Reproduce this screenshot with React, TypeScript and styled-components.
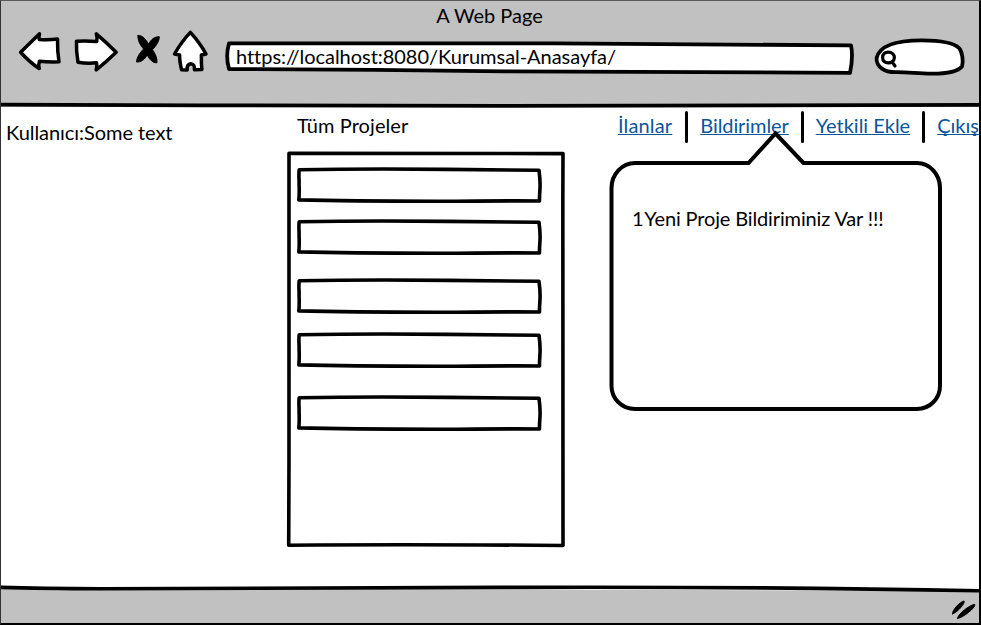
import React from "react";
import styled, { createGlobalStyle } from "styled-components";

const GlobalStyle = createGlobalStyle`
  * { box-sizing: border-box; }
  body { margin: 0; background: #fff; }
`;

const Window = styled.div`
  width: 981px;
  height: 625px;
  display: flex;
  flex-direction: column;
  overflow: hidden;
  border: solid #000;
  border-width: 1px 2px 2px 1px;
  border-top-color: #5a5a5a;
  border-left-color: #333;
  background: #fff;
  color: #000;
  font: 20px/24px Lato, "Open Sans", sans-serif;
  white-space: nowrap;
`;

const Header = styled.header`
  position: relative;
  flex: none;
  height: 106px;
  padding-top: 2px;
  background: #c1c1c1;
`;

const Title = styled.h1`
  margin: 0;
  padding-right: 1px;
  font: inherit;
  text-align: center;
`;

const Toolbar = styled.div`
  display: flex;
  align-items: flex-start;
`;

const Icon = styled.svg<{ $gap: number; $drop?: number }>`
  display: block;
  flex: none;
  margin-left: ${(p) => p.$gap}px;
  margin-top: ${(p) => p.$drop ?? 0}px;
  overflow: visible;
  fill: #fff;
  stroke: #000;
  stroke-width: 3.5;
  stroke-linejoin: round;
  stroke-linecap: round;
`;

const Outline = styled.svg<{ $fill?: string; $weight?: number }>`
  position: absolute;
  inset: 0;
  width: 100%;
  height: 100%;
  overflow: visible;
  fill: ${(p) => p.$fill ?? "none"};
  stroke: #000;
  stroke-width: ${(p) => p.$weight ?? 3.6};
  stroke-linejoin: round;
  stroke-linecap: round;
`;

const AddressBar = styled.div`
  position: relative;
  width: 628px;
  height: 34px;
  margin: 13px 0 0 18px;
  padding: 4px 0 0 11px;
`;

const Label = styled.span<{ $spacing?: number }>`
  position: relative;
  display: block;
  letter-spacing: ${(p) => p.$spacing ?? 0}px;
`;

const Count = styled.span`
  letter-spacing: -2.2px;
`;

const SearchBox = styled.div`
  position: relative;
  width: 90px;
  height: 36px;
  margin: 12px 0 0 22px;
`;

const Content = styled.main`
  flex: 1;
  min-height: 0;
  display: grid;
  grid-template-columns: 286px 322px 1fr;
`;

const UserInfo = styled.section`
  padding: 13px 0 0 5px;
`;

const Projects = styled.section`
  display: flex;
  flex-direction: column;
  padding-top: 6px;
`;

const Heading = styled.h2<{ $indent: number }>`
  margin: 0 0 0 ${(p) => p.$indent}px;
  font: inherit;
  letter-spacing: 0.08px;
`;

const Panel = styled.div`
  position: relative;
  width: 278px;
  height: 396px;
  margin-top: 14px;
  padding: 16px 0 0 10px;
`;

const Field = styled.div<{ $gap: number }>`
  position: relative;
  width: 245px;
  height: 35px;
  margin-bottom: ${(p) => p.$gap}px;
`;

const Side = styled.section`
  min-width: 0;
  overflow: hidden;
`;

const Nav = styled.nav`
  display: flex;
  height: 50px;
  padding: 6px 0 0 9px;
`;

const Link = styled.a<{ $spacing?: number }>`
  height: 24px;
  color: #0b559b;
  letter-spacing: ${(p) => p.$spacing ?? 0}px;
  text-decoration: underline 1px;
  text-underline-offset: 1px;
  text-decoration-skip-ink: none;
`;

const Divider = styled.i<{ $before: number; $after: number }>`
  flex: none;
  width: 3px;
  height: 32px;
  margin: -2px ${(p) => p.$after}px 0 ${(p) => p.$before}px;
  border-radius: 2px;
  background: #000;
`;

const Bubble = styled.div`
  position: relative;
  width: 333px;
  height: 250px;
  margin-top: 4px;
  padding: 45px 0 0 23px;
`;

const Footer = styled.footer`
  position: relative;
  flex: none;
  height: 35px;
`;

const fieldGaps = [17, 24, 19, 28, 0];

const SketchField = ({ gap }: { gap: number }) => (
  <Field $gap={gap}>
    <Outline viewBox="0 0 245 35">
      <path d="M2.2 2.8 C50 1.9 110 2 150 2.4 S220 2.9 242 3.2 C242.8 9 243.1 12 243.1 18 S242.3 28 242.5 34 C200 33.6 170 34.4 140 34.3 S50 34 1.8 32.9 C2.7 25 2 20 2.1 16 S1.5 8 2.2 2.8Z" />
    </Outline>
  </Field>
);

export default function App() {
  return (
    <>
      <GlobalStyle />
      <Window>
        <Header>
          <Outline viewBox="0 0 978 106" $weight={3.8}>
            <path d="M0 103.6 L200 104.4 L500 104.8 L978 103.9" />
          </Outline>
          <Title>A Web Page</Title>
          <Toolbar>
            <Icon $gap={17} $drop={4} width="43" height="40" viewBox="0 0 43 40">
              <path d="M2.6 21.2 L21.5 2.8 Q20.6 6 21.3 8.4 Q31 9.2 39.5 7.9 Q39.3 20 41 30.8 Q31 31.2 21.4 30.3 Q20.2 33.5 21.2 37.5 Q12 31.5 2.6 21.2Z" />
            </Icon>
            <Icon $gap={13} $drop={4} width="43" height="40" viewBox="0 0 43 40">
              <path d="M2.5 10.2 Q12 9.7 22.8 10.4 Q23.5 6.5 22.3 2.8 Q32 11 42.2 21.2 Q32 31 22.2 39 Q23.4 35 22.5 31.8 Q13 32.7 4 31.2 Q2 20 2.5 10.2Z" />
            </Icon>
            <Icon $gap={18} $drop={7} width="26" height="30" viewBox="0 0 26 30">
              <path
                fill="#000"
                stroke="#000"
                strokeWidth="1"
                d="M3 1.6 C7 .8 11 5 13.4 10.2 C16 5.5 20 2.2 24.3 2.8 C24.4 7 21 12 17.4 15.8 C20.5 19.5 22.5 25 21.9 28.8 C18 29.2 14.5 25.5 12.3 21 C9.5 25.5 6 28.4 1.5 28 C1.6 23.5 5 18.5 8.6 15 C5 11 2.4 5.5 3 1.6Z"
              />
            </Icon>
            <Icon $gap={12} $drop={4} width="34" height="40" viewBox="0 0 34 40">
              <path d="M17.4 1.4 Q27 12 33 23 L28.4 24 Q28.2 32 28.9 38.5 L21.4 38.8 Q22 33 17.6 32.7 Q13.6 33.5 14.2 39 L8.6 38.8 Q6.4 30 6.6 24 L1.5 23 Q9 10 17.4 1.4Z" />
            </Icon>
            <AddressBar>
              <Outline viewBox="0 0 628 34" $fill="#fff" $weight={3.8}>
                <path d="M4 3.4 C150 3.2 250 2.8 330 3.3 S500 4.8 626 5.4 Q628.4 17 625 32.8 C500 32.9 390 32.9 280 31.4 S120 29.6 4 29 Q.3 16 4 3.4Z" />
              </Outline>
              <Label $spacing={-0.04}>https://localhost:8080/Kurumsal-Anasayfa/</Label>
            </AddressBar>
            <SearchBox>
              <Outline viewBox="0 0 90 36" $fill="#fff" $weight={3.8}>
                <path d="M1.6 19 C4 8 18 1.3 47 1.3 C66 1.4 79.5 4.5 84 9 C87.5 13 88.5 22 87 27.5 C83 32.5 70 34.8 56 34.7 C42 34.3 30 33 21 33.2 C10 33.5 1 28 1.6 19Z" />
                <path
                  strokeWidth="3.2"
                  d="M7.6 18.7 C7.5 15 10 13.2 13.2 13.2 C16.8 13.2 19.4 15.2 19.4 18.7 C19.2 22.2 16.2 23.9 13.2 23.8 C10 23.8 7.6 22 7.6 18.7Z M17 22.6 L20 27"
                />
              </Outline>
            </SearchBox>
          </Toolbar>
        </Header>
        <Content>
          <UserInfo>
            <Label $spacing={-0.06}>Kullanıcı:Some text</Label>
          </UserInfo>
          <Projects>
            <Heading $indent={10}>Tüm Projeler</Heading>
            <Panel>
              <Outline viewBox="0 0 278 396">
                <path d="M2 2.2 C80 1.8 170 1.6 276 2.6 C275.6 110 275.5 200 276 394.5 C180 393.6 90 393.4 1.7 394.2 C2.3 260 2.2 120 2 2.2Z" />
              </Outline>
              {fieldGaps.map((gap, i) => (
                <SketchField key={i} gap={gap} />
              ))}
            </Panel>
          </Projects>
          <Side>
            <Nav>
              <Link $spacing={0.15}>İlanlar</Link>
              <Divider $before={13} $after={12} />
              <Link $spacing={-0.08}>Bildirimler</Link>
              <Divider $before={12} $after={12} />
              <Link>Yetkili Ekle</Link>
              <Divider $before={12} $after={12} />
              <Link>Çıkış</Link>
            </Nav>
            <Bubble>
              <Outline viewBox="0 0 333 250" $weight={4}>
                <path
                  strokeLinejoin="miter"
                  d="M26 2 H139.5 L166.5 -27.5 L194.5 2 H308 A23 25 0 0 1 331 27 V225 A23 23 0 0 1 308 248 H26 A23.5 23 0 0 1 2.5 225 V27 A23.5 25 0 0 1 26 2Z"
                />
              </Outline>
              <Label $spacing={-0.14}>
                <Count>1 </Count>Yeni Proje Bildiriminiz Var !!!
              </Label>
            </Bubble>
          </Side>
        </Content>
        <Footer>
          <Outline viewBox="0 0 978 35" $fill="#c1c1c1">
            <path stroke="none" d="M0 0 L978 2.8 V35 H0Z" />
            <path fill="none" d="M0 -.6 Q40 .5 100 .7 T500 -.6 Q750 -1.6 978 2.8" />
            <path
              fill="#000"
              strokeWidth="1"
              d="M951.6 25.8 C950.5 22.8 958.8 13.8 963 13 C965 14.6 955.8 25.2 951.6 25.8Z M956.6 30.4 C955.8 27 969 16.4 973.8 16.4 C975 19.4 961.5 30.2 956.6 30.4Z"
            />
          </Outline>
        </Footer>
      </Window>
    </>
  );
}
